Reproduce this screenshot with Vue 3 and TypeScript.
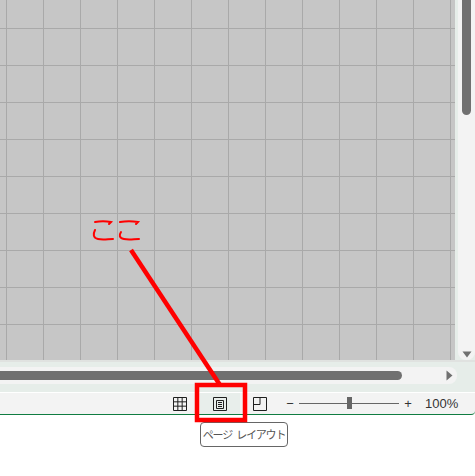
<template>
  <div class="window">
    <div class="main">
      <div class="sheet"></div>
      <div class="v-gap"></div>
      <div class="v-scroll">
        <div class="v-thumb"></div>
        <svg class="v-arrow" width="10" height="7" viewBox="0 0 10 7">
          <path d="M0.5 0.5H9.5L5 6.5Z" fill="#707070" />
        </svg>
      </div>
    </div>

    <div class="h-area">
      <div class="h-scroll">
        <div class="h-thumb"></div>
        <svg class="h-arrow" width="7" height="11" viewBox="0 0 7 11">
          <path d="M0.5 0.5V10.5L6.5 5.5Z" fill="#707070" />
        </svg>
      </div>
    </div>

    <div class="status">
      <button class="view-btn">
        <svg width="14" height="14" viewBox="0 0 14 14" fill="none" stroke="#1f1f1f">
          <path d="M.5.5h13v13H.5zM.5 4.83h13M.5 9.17h13M4.83.5v13M9.17.5v13" />
        </svg>
      </button>
      <button class="view-btn active">
        <svg width="14" height="14" viewBox="0 0 14 14" fill="none" stroke="#1f1f1f">
          <path d="M.5.5h13v13H.5zM3.5 3.5h7v8h-7zM5 5.5h4M5 7.5h4M5 9.5h4" />
        </svg>
      </button>
      <button class="view-btn">
        <svg width="14" height="14" viewBox="0 0 14 14" fill="none" stroke="#1f1f1f">
          <path d="M.5.5h13v13H.5zM.5 7.5h6.5V.5" />
        </svg>
      </button>
      <div class="zoom">
        <span class="zoom-sign">−</span>
        <div class="slider"><div class="slider-thumb"></div></div>
        <span class="zoom-sign">+</span>
        <span class="zoom-value">{{ zoomLevel }}%</span>
      </div>
    </div>

    <div class="below">
      <div class="tooltip">ページ レイアウト</div>
    </div>

    <!-- 赤い注釈 -->
    <svg class="note" width="475" height="476" viewBox="0 0 475 476" fill="none" stroke="#ff0000">
      <path d="M95 222C100 221 106 221 111 222L109 224M95 230C93 234 93 238 98 239C103 240 108 239 113 239" stroke-width="2" stroke-linecap="round" />
      <path d="M120 222C126 221 132 221 138 222L136 224M121 232C119 235 119 238 124 239C129 240 134 239 139 239" stroke-width="2" stroke-linecap="round" />
      <path d="M131 250L220 385" stroke-width="4.5" />
      <rect x="197" y="385" width="48" height="35" stroke-width="4.5" />
    </svg>
  </div>
</template>

<script setup lang="ts">
import { ref } from 'vue';

const zoomLevel = ref<number>(100);
</script>

<style>
html,
body {
  margin: 0;
  background: #fff;
}
</style>

<style scoped>
.window {
  position: relative;
  width: 475px;
  height: 476px;
  overflow: hidden;
  background: #fff;
  font-family: "Noto Sans CJK JP", "Liberation Sans", sans-serif;
}

.main {
  display: flex;
  height: 360px;
  background: #e6ede9;
}

.sheet {
  width: 455px;
  background-color: #c6c6c6;
  background-image:
    linear-gradient(to right, #a9a9a9 1px, transparent 1px),
    linear-gradient(to bottom, #a9a9a9 1px, transparent 1px);
  background-size: 37px 37px;
  background-position: 6px 28px;
}

.v-gap {
  width: 3px;
}

.v-scroll {
  display: flex;
  flex-direction: column;
  align-items: center;
  justify-content: space-between;
  width: 17px;
  background: #f3f3f3;
  border-radius: 0 0 8px 8px;
  padding-bottom: 2px;
  box-sizing: border-box;
}

.v-thumb {
  width: 9px;
  height: 115px;
  background: #707070;
  border-radius: 0 0 5px 5px;
}

.h-area {
  height: 32px;
  padding: 7px 18px 8px 0;
  box-sizing: border-box;
  background: #e6ede9;
  border-top: 2px solid #e0e2e0;
}

.h-scroll {
  display: flex;
  align-items: center;
  justify-content: space-between;
  height: 17px;
  margin-top: -2px;
  padding: 0 4px 0 0;
  background: #f3f3f3;
  border-radius: 0 8px 8px 0;
}

.h-thumb {
  width: 402px;
  height: 9px;
  background: #707070;
  border-radius: 0 5px 5px 0;
}

.status {
  display: flex;
  align-items: stretch;
  height: 23px;
  box-sizing: border-box;
  padding-left: 160px;
  background: #f3f3f3;
  border-top: 1px solid #fff;
  border-bottom: 1px solid #107c41;
  border-bottom-right-radius: 4px;
}

.view-btn {
  display: flex;
  align-items: center;
  justify-content: center;
  width: 40px;
  padding: 0;
  border: 0;
  background: none;
}

.view-btn.active {
  background: #e8eeeb;
}

.zoom {
  display: flex;
  align-items: center;
  margin-left: 4px;
  color: #333;
}

.zoom-sign {
  width: 12px;
  font-family: "Liberation Sans", sans-serif;
  font-size: 13px;
  text-align: center;
}

.slider {
  position: relative;
  width: 100px;
  height: 1px;
  margin: 0 3px;
  background: #666;
}

.slider-thumb {
  position: absolute;
  left: 48px;
  top: -6px;
  width: 5px;
  height: 12px;
  background: #666;
}

.zoom-value {
  margin-left: 11px;
  font-family: "Liberation Sans", sans-serif;
  font-size: 13px;
}

.below {
  position: relative;
}

.tooltip {
  position: absolute;
  left: 200px;
  top: 7px;
  width: 88px;
  height: 25px;
  box-sizing: border-box;
  border: 1px solid #666;
  border-radius: 4px;
  background: #fff;
  color: #555;
  font-size: 11px;
  letter-spacing: -1.2px;
  word-spacing: 3px;
  line-height: 23px;
  text-align: center;
  white-space: nowrap;
}

.note {
  position: absolute;
  left: 0;
  top: 0;
  pointer-events: none;
}
</style>
